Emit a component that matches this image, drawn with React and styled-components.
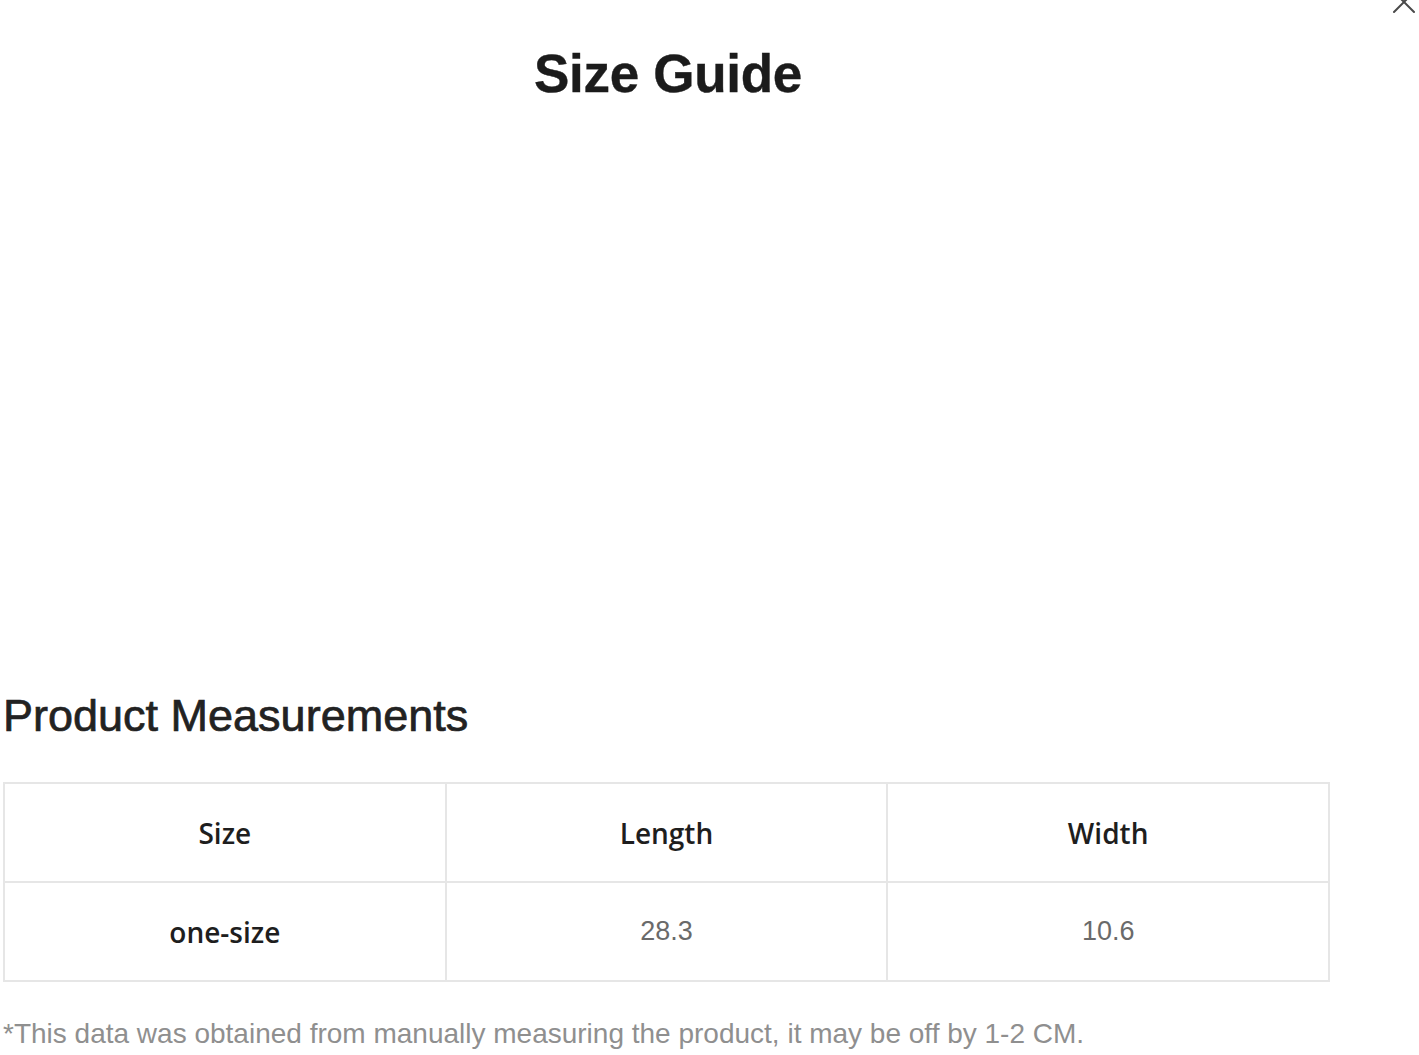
import React from "react";
import styled, { createGlobalStyle } from "styled-components";

const Global = createGlobalStyle`
  html, body { margin: 0; padding: 0; background: #ffffff; }
  body { font-family: "Liberation Sans", Arial, sans-serif; overflow: hidden; }
`;

const Page = styled.div`
  position: relative;
  width: 1419px;
  height: 1055px;
  overflow: hidden;
  background: #fff;
`;

const Close = styled.button`
  position: absolute;
  top: -13px;
  right: 0px;
  width: 30px;
  height: 30px;
  padding: 0;
  border: 0;
  background: transparent;
  color: #4a4a4a;
  display: flex;
  align-items: center;
  justify-content: center;
`;

const Content = styled.div`
  width: 1330px;
  padding: 0 0 0 3px;
  display: flex;
  flex-direction: column;
`;

const Title = styled.h1`
  margin: 0;
  padding-top: 42px;
  font-family: "Liberation Sans", Arial, sans-serif;
  font-weight: 700;
  font-size: 53px;
  line-height: 64px;
  letter-spacing: -0.3px;
  color: #1b1b1b;
  text-align: center;
  -webkit-text-stroke: 0.4px #1b1b1b;
`;

const ImageArea = styled.div`
  height: 584px;
`;

const Heading = styled.h2`
  margin: 0 0 40px 0;
  font-family: "Liberation Sans", Arial, sans-serif;
  font-weight: 400;
  font-size: 45px;
  line-height: 52px;
  color: #222;
  -webkit-text-stroke: 0.7px #222;
`;

const Table = styled.table`
  width: 1327px;
  border-collapse: collapse;
  table-layout: fixed;
`;

const Cell = styled.td`
  height: 97px;
  padding: 0;
  border: 2px solid #e6e6e6;
  text-align: center;
  vertical-align: middle;
  font-family: ${(p) =>
    p.$strong ? '"Open Sans", "Noto Sans", sans-serif' : '"Liberation Sans", Arial, sans-serif'};
  font-weight: ${(p) => (p.$strong ? 600 : 400)};
  font-size: ${(p) => (p.$strong ? "28px" : "27px")};
  color: ${(p) => (p.$strong ? "#1e1e1e" : "#6a6a6a")};
`;

const Note = styled.p`
  margin: 36px 0 0 0;
  font-family: "Liberation Sans", Arial, sans-serif;
  font-size: 28px;
  line-height: 32px;
  color: #8f8f8f;
  white-space: nowrap;
`;

const headers = ["Size", "Length", "Width"];
const rows = [["one-size", "28.3", "10.6"]];

export default function App() {
  return (
    <Page>
      <Global />
      <Close aria-label="Close">
        <svg width="26" height="26" viewBox="0 0 26 26" fill="none">
          <path d="M3 3L23 23M23 3L3 23" stroke="currentColor" strokeWidth="2" strokeLinecap="round" />
        </svg>
      </Close>
      <Content>
        <Title>Size Guide</Title>
        <ImageArea />
        <Heading>Product Measurements</Heading>
        <Table>
          <tbody>
            <tr>
              {headers.map((h) => (
                <Cell as="th" key={h} $strong>
                  {h}
                </Cell>
              ))}
            </tr>
            {rows.map((r) => (
              <tr key={r[0]}>
                {r.map((v, i) => (
                  <Cell key={i} $strong={i === 0}>
                    {v}
                  </Cell>
                ))}
              </tr>
            ))}
          </tbody>
        </Table>
        <Note>*This data was obtained from manually measuring the product, it may be off by 1-2 CM.</Note>
      </Content>
    </Page>
  );
}
